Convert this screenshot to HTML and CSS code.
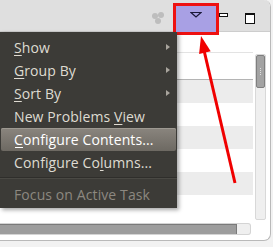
FILE: index.html
```html
<!DOCTYPE html>
<html lang="en">
<head>
    <meta charset="UTF-8">
    <title>Problems view menu</title>
    <link rel="stylesheet" href="styles.css">
</head>
<body>
    <div class="window">
        <div class="toolbar">
            <span class="ghost-icon">
                <i></i><i></i><i></i>
            </span>
            <span class="view-menu">
                <svg width="12" height="7" viewBox="0 0 12 7"><path d="M1 1.5 H11 L6 6 Z" fill="none" stroke="#1c1a3a" stroke-width="1.2"/></svg>
            </span>
            <span class="btn-min"></span>
            <span class="btn-max"></span>
        </div>
        <div class="content">
            <div class="table">
                <div class="thead"></div>
                <div class="row alt"></div>
                <div class="row"></div>
                <div class="row alt"></div>
                <div class="row"></div>
                <div class="row alt"></div>
                <div class="row"></div>
            </div>
            <div class="vscroll"><div class="vthumb"><span></span></div></div>
        </div>
        <div class="hscroll"><div class="hthumb"></div></div>
    </div>

    <!-- menu that drops from the view menu button -->
    <ul class="menu">
        <li class="sub"><span class="label"><span class="key">S</span>how</span></li>
        <li class="sub"><span class="label"><span class="key">G</span>roup By</span></li>
        <li class="sub"><span class="label"><span class="key">S</span>ort By</span></li>
        <li><span class="label">New Problems <span class="key">V</span>iew</span></li>
        <li class="hovered"><span class="label first-key">Configure Contents...</span></li>
        <li><span class="label">Configure Co<span class="key">l</span>umns...</span></li>
        <li class="sep"></li>
        <li class="disabled"><span class="label">Focus on Active Task</span></li>
    </ul>

    <svg class="arrow" width="50" height="155" viewBox="0 0 50 155">
        <line x1="13" y1="12" x2="45" y2="149" stroke="#f00000" stroke-width="3"/>
        <path d="M11 2 L20.7 17.2 L9.1 20 Z" fill="#f00000"/>
    </svg>
</body>
</html>
```

FILE: styles.css
```css
body {
    margin: 0;
    width: 273px;
    height: 247px;
    background: #f2f2f2;
    font-family: "Open Sans", "DejaVu Sans", sans-serif;
    position: relative;
    overflow: hidden;
}
.window {
    width: 270px;
    height: 240px;
    background: #ffffff;
    border-right: 1px solid #b9b9b9;
    border-bottom: 1px solid #b9b9b9;
    border-radius: 0 7px 7px 0;
    overflow: hidden;
    display: flex;
    flex-direction: column;
}
.toolbar {
    height: 32px;
    flex: none;
    background: #dfdfdf;
    border-bottom: 1px solid #cdcdcd;
    box-sizing: border-box;
    position: relative;
}
.ghost-icon {
    position: absolute;
    left: 152px;
    top: 12px;
    width: 14px;
    height: 12px;
}
.ghost-icon i {
    position: absolute;
    width: 6px;
    height: 6px;
    border-radius: 50%;
    background: #bdbdbd;
}
.ghost-icon i:nth-child(1) { left: 0; top: 1px; }
.ghost-icon i:nth-child(2) { left: 6px; top: 0; }
.ghost-icon i:nth-child(3) { left: 3px; top: 6px; }
.view-menu {
    position: absolute;
    left: 173px;
    top: 3px;
    width: 40px;
    height: 21px;
    padding-top: 5px;
    background: #a8a0e4;
    border: 3px solid #ee1111;
    display: flex;
    justify-content: center;
    align-items: flex-start;
}
.btn-min {
    position: absolute;
    left: 219px;
    top: 13px;
    width: 7px;
    height: 2px;
    background: #fff;
    border: 1px solid #111;
}
.btn-max {
    position: absolute;
    left: 245px;
    top: 13px;
    width: 8px;
    height: 8px;
    background: #fff;
    border: 1px solid #111;
    border-top-width: 2px;
}
.content {
    flex: 1;
    display: flex;
    padding: 20px 4px 0 0;
}
.table {
    flex: 1;
    border-top: 1px solid #e3e3e3;
}
.thead {
    height: 26px;
    border-bottom: 1px solid #b4b4b4;
}
.row {
    height: 23px;
    background: #ffffff;
}
.row.alt {
    background: #ececec;
}
.vscroll {
    width: 11px;
    margin: 2px 0 0 2px;
    height: 166px;
    background: #efefef;
    border: 1px solid #d8d8d8;
    border-radius: 2px;
    box-sizing: border-box;
}
.vthumb {
    height: 31px;
    background: #a3a3a3;
    border: 1px solid #7f7f7f;
    border-radius: 2px;
    display: flex;
    justify-content: center;
    align-items: center;
}
.vthumb span {
    width: 1px;
    height: 7px;
    border-left: 1px dotted #e0e0e0;
}
.hscroll {
    flex: none;
    height: 12px;
    width: 251px;
    margin: 3px 0 5px;
    background: #efefef;
    border: 1px solid #d4d4d4;
    border-left: none;
    border-radius: 0 3px 3px 0;
    box-sizing: border-box;
}
.hthumb {
    width: 237px;
    height: 100%;
    background: #9d9d9d;
    border-top: 1px solid #7a7a7a;
    border-right: 1px solid #7a7a7a;
    box-sizing: border-box;
}
.menu {
    position: absolute;
    left: 0;
    top: 32px;
    width: 177px;
    margin: 0;
    padding: 4px 0 2px;
    list-style: none;
    background: #3c3b37;
    box-shadow: 2px 2px 4px rgba(0, 0, 0, 0.35);
    font-size: 14px;
    color: #dfdbd2;
}
.menu li {
    height: 23px;
    line-height: 23px;
    padding: 0 1px;
    position: relative;
    white-space: nowrap;
}
.label {
    display: block;
    height: 100%;
    padding-left: 13px;
    letter-spacing: 0.1px;
    position: relative;
}
.key {
    text-decoration: underline;
    text-decoration-thickness: 1px;
    text-underline-offset: 2px;
}
.first-key::after {
    content: "";
    position: absolute;
    left: 14px;
    bottom: 3px;
    width: 8px;
    height: 1px;
    background: #ffffff;
}
.menu li.sub::after {
    content: "";
    position: absolute;
    right: 7px;
    top: 8px;
    border-left: 4px solid #a9a59d;
    border-top: 3.5px solid transparent;
    border-bottom: 3.5px solid transparent;
}
.menu li.hovered .label {
    background: linear-gradient(#8a857e, #6d6962);
    box-shadow: inset 0 1px 0 #9d9991;
    border-radius: 2px;
    color: #ffffff;
}
.menu li.sep {
    height: 0;
    margin: 3px 0 4px;
    border-top: 1px solid #2f2e2b;
    border-bottom: 1px solid #4a4944;
}
.menu li.disabled {
    color: #8c8880;
}
.arrow {
    position: absolute;
    left: 190px;
    top: 34px;
}
```
